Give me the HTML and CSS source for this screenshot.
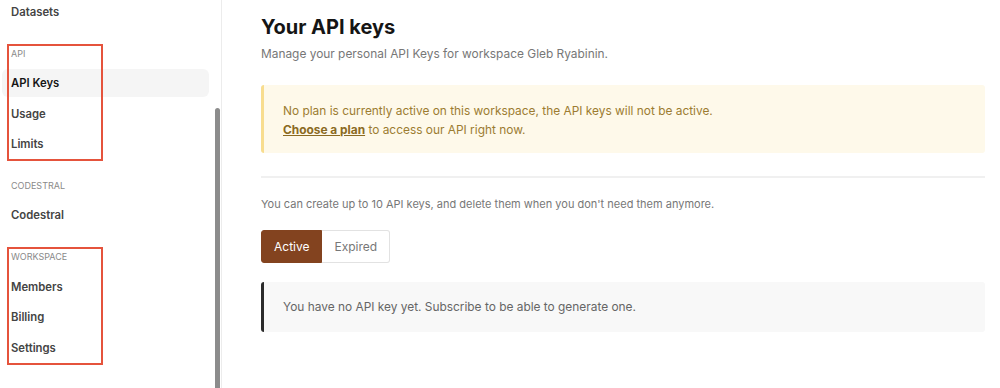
FILE: index.html
```html
<!DOCTYPE html>
<html lang="en">
<head>
  <meta charset="UTF-8" />
  <title>API Keys</title>
  <link rel="stylesheet" href="styles.css">
</head>
<body>
  <div class="layout">
    <!-- Sidebar navigation -->
    <aside class="sidebar">
      <div class="nav">
        <a class="nav-item">Datasets</a>

        <div class="nav-group marked">
          <div class="nav-label">API</div>
          <a class="nav-item active">API Keys</a>
          <a class="nav-item">Usage</a>
          <a class="nav-item">Limits</a>
        </div>

        <div class="nav-group">
          <div class="nav-label">Codestral</div>
          <a class="nav-item">Codestral</a>
        </div>

        <div class="nav-group marked">
          <div class="nav-label">Workspace</div>
          <a class="nav-item">Members</a>
          <a class="nav-item">Billing</a>
          <a class="nav-item">Settings</a>
        </div>
      </div>
      <div class="scroll-thumb"></div>
    </aside>

    <!-- Main content -->
    <main class="content">
      <h1>Your API keys</h1>
      <p class="subtitle">Manage your personal API Keys for workspace Gleb Ryabinin.</p>

      <div class="alert">
        No plan is currently active on this workspace, the API keys will not be active.<br>
        <a class="alert-link">Choose a plan</a> to access our API right now.
      </div>

      <hr class="divider">

      <p class="hint">You can create up to 10 API keys, and delete them when you don't need them anymore.</p>

      <div class="toggle">
        <button class="toggle-btn selected">Active</button>
        <button class="toggle-btn">Expired</button>
      </div>

      <div class="empty">You have no API key yet. Subscribe to be able to generate one.</div>
    </main>
  </div>
</body>
</html>
```

FILE: styles.css
```css
body {
  margin: 0;
  font-family: Inter, "Noto Sans", Arial, sans-serif;
  background: white;
  height: 388px;
  overflow: hidden;
}

.layout {
  display: flex;
  height: 388px;
}

.sidebar {
  position: relative;
  width: 221px;
  flex-shrink: 0;
  border-right: 1px solid #ececec;
  overflow: hidden;
}

.nav {
  margin-top: -2px;
}

.nav-group {
  position: relative;
  padding-top: 17px;
}

/* red annotation frame drawn over the group */
.nav-group.marked::after {
  content: "";
  position: absolute;
  left: 7px;
  top: 15.5px;
  width: 92px;
  bottom: -3px;
  border: 2px solid #e5533c;
}

.nav-label {
  font-size: 9px;
  line-height: 15px;
  text-transform: uppercase;
  color: #8a8a8a;
  padding-left: 11px;
  margin-bottom: 8.7px;
}

.nav-item {
  display: block;
  margin: 0 12px 2.5px 2px;
  height: 28px;
  line-height: 28px;
  padding-left: 9px;
  border-radius: 6px;
  font-size: 11.3px;
  font-weight: 600;
  color: #444;
}

.nav-item.active {
  background: #f5f5f5;
  color: #151515;
}

.scroll-thumb {
  position: absolute;
  left: 215px;
  top: 108px;
  width: 5px;
  height: 300px;
  border-radius: 3px;
  background: #8c8c8c;
}

.content {
  flex: 1;
  padding: 15px 15px 0 39px;
}

h1 {
  margin: 0;
  font-size: 20px;
  line-height: 24px;
  font-weight: 700;
  color: #151515;
}

.subtitle {
  margin: 7px 0 0;
  font-size: 11.9px;
  line-height: 16px;
  color: #777;
}

.alert {
  margin-top: 23px;
  padding: 15.5px 19px 14.5px;
  border-left: 3px solid #f8dd8f;
  border-radius: 3px;
  background: #fef9ea;
  color: #9c7c31;
  font-size: 11.9px;
  line-height: 19px;
}

.alert-link {
  font-weight: 700;
  color: #8a6a22;
  text-decoration: underline;
}

.divider {
  margin: 23px 0 0;
  border: none;
  height: 2px;
  background: #f0f0f0;
}

.hint {
  margin: 19px 0 0;
  font-size: 11px;
  line-height: 14px;
  color: #777;
}

.toggle {
  display: flex;
  margin-top: 19px;
}

.toggle-btn {
  height: 33px;
  padding: 0 12px;
  font-family: inherit;
  font-size: 12px;
  border: 1px solid #e2e2e2;
  background: white;
  color: #777;
  cursor: pointer;
}

.toggle-btn:first-child {
  border-radius: 3px 0 0 3px;
}

.toggle-btn:last-child {
  border-left: none;
  border-radius: 0 3px 3px 0;
}

.toggle-btn.selected {
  background: #83431f;
  border-color: #83431f;
  color: white;
}

.empty {
  margin-top: 19px;
  height: 50px;
  line-height: 50px;
  padding-left: 19px;
  border-left: 3px solid #2b2b2b;
  border-radius: 3px;
  background: #f8f8f8;
  color: #666;
  font-size: 11.9px;
}
```
